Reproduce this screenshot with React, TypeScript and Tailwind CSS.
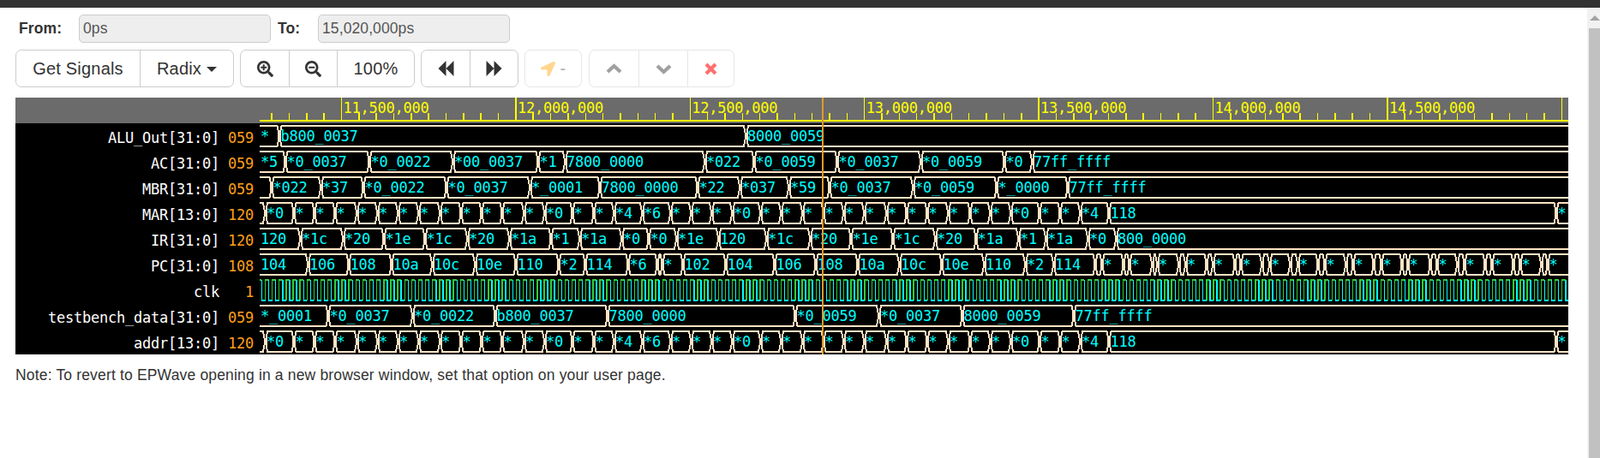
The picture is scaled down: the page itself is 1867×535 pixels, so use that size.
import React from "react";
import { FaLocationArrow, FaSearchMinus, FaSearchPlus } from "react-icons/fa";

const TRACK_LEFT = 303;
const TRACK_WIDTH = 1527;

type Signal = {
  name: string;
  value: string;
  edges: number[];
  labels: string[];
};

const marEdges = [
  309.5, 343, 367, 391, 416.5, 440.5, 464.5, 488.5, 513.5, 538, 562, 586, 611.5, 635.5, 668, 693, 716.5, 749.5, 782.5,
  806.5, 830.5, 854.5, 887.5, 911.5, 936.5, 961, 984.5, 1008.5, 1034.5, 1058, 1082, 1106.5, 1132, 1155.5, 1179.5, 1213,
  1237, 1260.5, 1294, 1816,
];
const marNamed: Record<number, string> = {
  0: "",
  1: "*0",
  14: "*0",
  17: "*4",
  18: "*6",
  22: "*0",
  35: "*0",
  38: "*4",
  39: "118",
};
const marLabels = Array.from({ length: 41 }, (_, i) => marNamed[i] ?? "*");

const pcTail = [
  1286, 1311, 1318, 1344.5, 1350.5, 1375.5, 1383.5, 1408, 1415.5, 1441, 1448, 1472.5, 1481.5, 1505.5, 1514.5, 1538,
  1546, 1570.5, 1579, 1603, 1612, 1636, 1643, 1669, 1677, 1700.5, 1709, 1733, 1741, 1766, 1774, 1798.5, 1806,
];

const signals: Signal[] = [
  { name: "ALU_Out[31:0]", value: "059", edges: [326, 870.5], labels: ["*", "b800_0037", "8000_0059"] },
  {
    name: "AC[31:0]",
    value: "059",
    edges: [333, 431, 528.5, 628, 659.5, 822.5, 880, 977, 1074.5, 1172, 1204.5],
    labels: [
      "*5",
      "*0_0037",
      "*0_0022",
      "*00_0037",
      "*1",
      "7800_0000",
      "*022",
      "*0_0059",
      "*0_0037",
      "*0_0059",
      "*0",
      "77ff_ffff",
    ],
  },
  {
    name: "MBR[31:0]",
    value: "059",
    edges: [317, 374.5, 424, 521, 618.5, 700, 814, 863.5, 920.5, 968, 1065.5, 1163, 1246],
    labels: [
      "",
      "*022",
      "*37",
      "*0_0022",
      "*0_0037",
      "*_0001",
      "7800_0000",
      "*22",
      "*037",
      "*59",
      "*0_0037",
      "*0_0059",
      "*_0000",
      "77ff_ffff",
    ],
  },
  { name: "MAR[13:0]", value: "120", edges: marEdges, labels: marLabels },
  {
    name: "IR[31:0]",
    value: "120",
    edges: [
      350.5, 400.5, 448, 496, 545.5, 594.5, 643, 676.5, 725.5, 757, 789.5, 838.5, 894.5, 945.5, 993, 1042, 1091.5, 1139,
      1188.5, 1220.5, 1269.5, 1302.5,
    ],
    labels: [
      "120",
      "*1c",
      "*20",
      "*1e",
      "*1c",
      "*20",
      "*1a",
      "*1",
      "*1a",
      "*0",
      "*0",
      "*1e",
      "120",
      "*1c",
      "*20",
      "*1e",
      "*1c",
      "*20",
      "*1a",
      "*1",
      "*1a",
      "*0",
      "800_0000",
    ],
  },
  {
    name: "PC[31:0]",
    value: "108",
    edges: [
      359.5, 407, 457, 504.5, 554.5, 602, 652, 683, 733, 767, 773, 797, 847, 904, 952, 1001, 1049.5, 1099, 1148.5,
      1196.5, 1229.5, 1278,
      ...pcTail,
    ],
    labels: [
      "104",
      "106",
      "108",
      "10a",
      "10c",
      "10e",
      "110",
      "*2",
      "114",
      "*6",
      "",
      "*",
      "102",
      "104",
      "106",
      "108",
      "10a",
      "10c",
      "10e",
      "110",
      "*2",
      "114",
      ...pcTail.map((_, i) => (i % 2 === 0 ? "" : "*")),
      "*",
    ],
  },
  { name: "clk", value: "1", edges: [], labels: [] },
  {
    name: "testbench_data[31:0]",
    value: "059",
    edges: [383, 481.5, 578, 709, 928, 1025.5, 1123, 1253],
    labels: [
      "*_0001",
      "*0_0037",
      "*0_0022",
      "b800_0037",
      "7800_0000",
      "*0_0059",
      "*0_0037",
      "8000_0059",
      "77ff_ffff",
    ],
  },
  { name: "addr[13:0]", value: "120", edges: marEdges, labels: marLabels },
];

const WaveText = ({ x, y, children, className }: { x: number; y: number; children: string; className: string }) => (
  <text x={x} y={y} className={`font-['DejaVu_Sans_Mono',monospace] text-[17px] tracking-[-0.23px] ${className}`}>
    {children}
  </text>
);

const BusWave = ({ signal }: { signal: Signal }) => {
  const top = 3;
  const bottom = 27;
  const bounds = [TRACK_LEFT - 10, ...signal.edges, TRACK_LEFT + TRACK_WIDTH + 10];

  return (
    <>
      {bounds.slice(0, -1).map((start, i) => {
        const end = bounds[i + 1];
        const a = start - TRACK_LEFT;
        const b = end - TRACK_LEFT;
        return (
          <React.Fragment key={i}>
            <path
              d={`M${a + 1} ${top + 8} L${a + 2.5} ${top} L${b - 2.5} ${top} L${b - 1} ${top + 8} L${b - 1} ${bottom - 8} L${b - 2.5} ${bottom} L${a + 2.5} ${bottom} L${a + 1} ${bottom - 8} Z`}
              fill="none"
              stroke="#ffe4c4"
              strokeWidth="2"
              shapeRendering="crispEdges"
            />
            {signal.labels[i] ? (
              <WaveText x={i === 0 ? 1 : a + 1.5} y={21} className="fill-[#00ffff]">
                {signal.labels[i]}
              </WaveText>
            ) : null}
          </React.Fragment>
        );
      })}
    </>
  );
};

const ClockWave = () => {
  const period = 8.136;
  const high: string[] = [];
  const low: string[] = [];
  for (let x = 309.5 - period; x < TRACK_LEFT + TRACK_WIDTH; x += period) {
    const up = x - TRACK_LEFT;
    const down = up + period / 2;
    const next = up + period;
    high.push(`M${up} 27 L${up} 3 L${down} 3`);
    low.push(`M${down} 3 L${down} 27 L${next} 27`);
  }
  return (
    <>
      <path d={high.join(" ")} fill="none" stroke="#32cd32" strokeWidth="1.4" shapeRendering="crispEdges" />
      <path d={low.join(" ")} fill="none" stroke="#00ffff" strokeWidth="1.4" shapeRendering="crispEdges" />
    </>
  );
};

const Ruler = () => {
  const majors = [398.5, 601.9, 805.3, 1008.7, 1212.1, 1415.5, 1618.9, 1822.3];
  const names = ["11,500,000", "12,000,000", "12,500,000", "13,000,000", "13,500,000", "14,000,000", "14,500,000"];
  const ticks: number[] = [];
  for (let x = 398.5 - 20.34 * 4; x < 1830; x += 20.34) ticks.push(x);

  return (
    <svg width={TRACK_WIDTH} height={30} className="block shrink-0">
      {ticks.map((x, i) => (
        <line
          key={i}
          x1={x - TRACK_LEFT}
          x2={x - TRACK_LEFT}
          y1={18}
          y2={27}
          stroke="#ffff00"
          strokeWidth="1.5"
          shapeRendering="crispEdges"
        />
      ))}
      {majors.map((x) => (
        <line
          key={x}
          x1={x - TRACK_LEFT}
          x2={x - TRACK_LEFT}
          y1={0}
          y2={27}
          stroke="#ffff00"
          strokeWidth="1.5"
          shapeRendering="crispEdges"
        />
      ))}
      {names.map((name, i) => (
        <WaveText key={name} x={majors[i] - TRACK_LEFT + 2} y={18} className="fill-[#ffff00]">
          {name}
        </WaveText>
      ))}
      <rect x={0} y={26} width={TRACK_WIDTH} height={2} fill="#ffff00" />
    </svg>
  );
};

const WaveRow = ({ signal }: { signal: Signal }) => (
  <div className="flex h-[30px] font-['DejaVu_Sans_Mono',monospace] text-[17px] leading-[30px] tracking-[-0.23px]">
    <div className="w-[238px] pt-[2px] text-right whitespace-nowrap text-white">{signal.name}</div>
    <div className="mr-[7px] w-[40px] pt-[2px] text-right text-[#ff9f1a]">{signal.value}</div>
    <svg width={TRACK_WIDTH} height={30} className="block shrink-0">
      {signal.edges.length ? <BusWave signal={signal} /> : <ClockWave />}
    </svg>
  </div>
);

const ToolButton = ({
  width,
  children,
  faded,
}: {
  width: string;
  children: React.ReactNode;
  faded?: boolean;
}) => (
  <button
    className={`flex h-full items-center justify-center border-l first:border-l-0 ${width} ${
      faded ? "border-[#e6e6e6]" : "border-[#ccc]"
    }`}
  >
    {children}
  </button>
);

const ToolGroup = ({ children, faded }: { children: React.ReactNode; faded?: boolean }) => (
  <div className={`flex h-[44px] rounded-[7px] border bg-white ${faded ? "border-[#e6e6e6]" : "border-[#ccc]"}`}>
    {children}
  </div>
);

const SkipIcon = ({ flip }: { flip?: boolean }) => (
  <svg width="19" height="18" viewBox="0 0 19 18" className={flip ? "-scale-x-100" : ""}>
    <path d="M9.5 0V18L0.5 9ZM18.5 0V18L9.5 9Z" fill="#333" />
  </svg>
);

const ChevronIcon = ({ down }: { down?: boolean }) => (
  <svg width="19" height="13" viewBox="0 0 19 13">
    <path d={down ? "M2 3L9.5 10L17 3" : "M2 10L9.5 3L17 10"} fill="none" stroke="#a0a0a0" strokeWidth="4.2" />
  </svg>
);

const CloseIcon = () => (
  <svg width="15" height="15" viewBox="0 0 15 15">
    <path d="M2 2L13 13M13 2L2 13" fill="none" stroke="#ff7070" strokeWidth="4.2" />
  </svg>
);

export default function App() {
  return (
    <div className="flex h-[535px] flex-col overflow-hidden bg-white font-['Liberation_Sans',sans-serif] text-[#333]">
      <div className="h-[9px] shrink-0 bg-[#333]" />
      <div className="flex min-h-0 flex-1">
        <div className="min-w-0 flex-1 pl-[18px]">
          <div className="mt-[8px] flex h-[33px] items-center text-[17.5px] tracking-[0.1px]">
            <label className="ml-[4px] w-[70px] font-bold">From:</label>
            <input
              readOnly
              value="0ps"
              className="h-full w-[224px] rounded-[5px] border border-[#ccc] bg-[#eee] px-[4px] text-[#555]"
            />
            <label className="ml-[8px] w-[47px] font-bold">To:</label>
            <input
              readOnly
              value="15,020,000ps"
              className="h-full w-[224px] rounded-[5px] border border-[#ccc] bg-[#eee] px-[4px] text-[#555]"
            />
          </div>

          <div className="mt-[8px] flex gap-[7px] text-[20px] tracking-[0.2px]">
            <ToolGroup>
              <ToolButton width="w-[144px]">Get Signals</ToolButton>
              <ToolButton width="w-[109px]">
                Radix
                <span className="ml-[6px] mt-[2px] h-0 w-0 border-x-[6px] border-t-[6px] border-x-transparent border-t-[#333]" />
              </ToolButton>
            </ToolGroup>
            <ToolGroup>
              <ToolButton width="w-[56px]">
                <FaSearchPlus className="size-[19px]" />
              </ToolButton>
              <ToolButton width="w-[56px]">
                <FaSearchMinus className="size-[19px]" />
              </ToolButton>
              <ToolButton width="w-[90px]">100%</ToolButton>
            </ToolGroup>
            <ToolGroup>
              <ToolButton width="w-[56px]">
                <SkipIcon />
              </ToolButton>
              <ToolButton width="w-[56px]">
                <SkipIcon flip />
              </ToolButton>
            </ToolGroup>
            <ToolGroup faded>
              <ToolButton width="w-[65px]" faded>
                <FaLocationArrow className="size-[17px] text-[#ffd68f]" />
                <span className="ml-[6px] text-[#aaa]">-</span>
              </ToolButton>
            </ToolGroup>
            <div className="ml-[1px]">
              <ToolGroup faded>
                <ToolButton width="w-[57px]" faded>
                  <ChevronIcon />
                </ToolButton>
                <ToolButton width="w-[57px]" faded>
                  <ChevronIcon down />
                </ToolButton>
                <ToolButton width="w-[54px]" faded>
                  <CloseIcon />
                </ToolButton>
              </ToolGroup>
            </div>
          </div>

          <div className="relative mt-[12px] w-[1812px] bg-black">
            <div className="flex h-[30px] justify-end bg-[#6b6b6b]">
              <Ruler />
            </div>
            {signals.map((signal) => (
              <WaveRow key={signal.name} signal={signal} />
            ))}
            <div className="absolute top-0 bottom-0 left-[941px] w-[2px] bg-[#e09a2b]" />
          </div>

          <p className="mt-[14px] text-[17.5px] leading-[20px] tracking-[0.167px]">
            Note: To revert to EPWave opening in a new browser window, set that option on your user page.
          </p>
        </div>

        <div className="flex w-[15px] shrink-0 flex-col bg-[#f1f1f1] pl-[2px]">
          <div className="flex h-[24px] items-center justify-center">
            <span className="h-0 w-0 border-x-[6px] border-b-[6px] border-x-transparent border-b-[#a3a3a3]" />
          </div>
          <div className="flex-1 bg-[#c1c1c1]" />
        </div>
      </div>
    </div>
  );
}
